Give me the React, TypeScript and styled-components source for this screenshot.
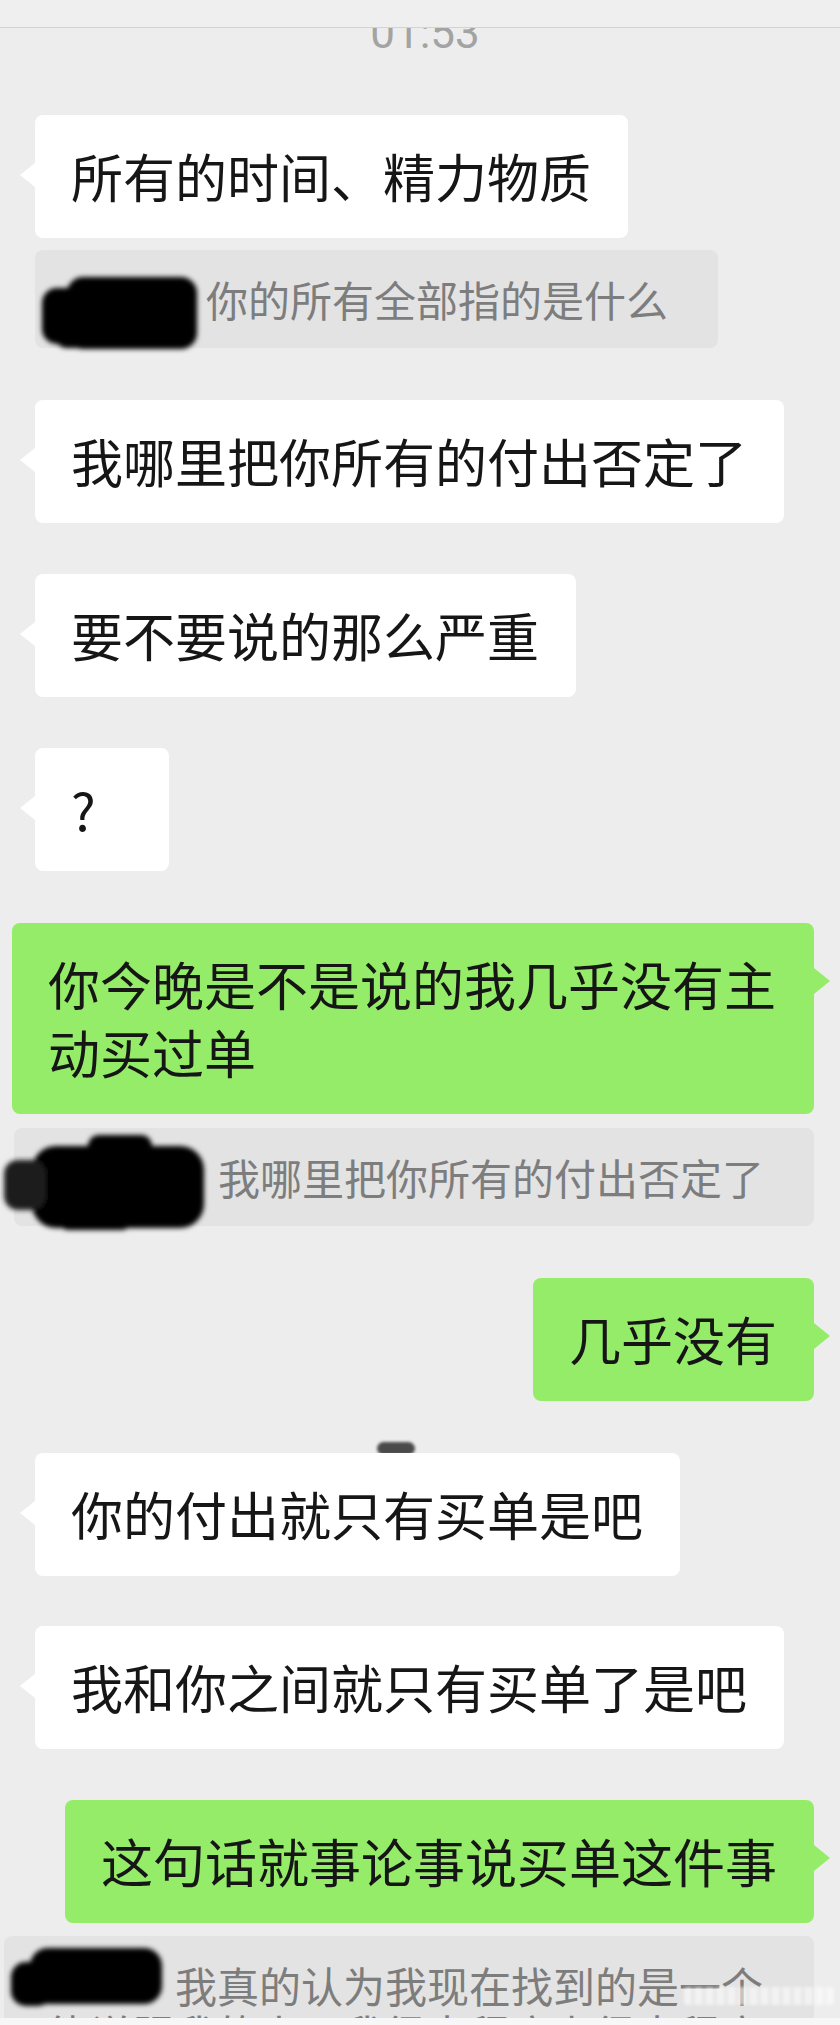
import React from "react";
import styled, { createGlobalStyle } from "styled-components";

type Side = "left" | "right";

const GlobalStyle = createGlobalStyle`
  html, body {
    margin: 0;
    padding: 0;
    background: #ededed;
  }
  body {
    font-family: "Noto Sans CJK SC", "Noto Sans", sans-serif;
  }
  * {
    box-sizing: border-box;
  }
`;

const Page = styled.div`
  position: relative;
  width: 840px;
  height: 2025px;
  overflow: hidden;
  display: flex;
  flex-direction: column;
  background: #ededed;
`;

const TopEdge = styled.div`
  flex: none;
  height: 28px;
  background: #efefef;
  border-bottom: 1px solid #d3d3d3;
`;

const TimeRow = styled.div`
  flex: none;
  height: 20px;
  overflow: hidden;
  display: flex;
  justify-content: center;
  padding-left: 10px;
`;

const TimeText = styled.span`
  font-family: Roboto, "Liberation Sans", sans-serif;
  font-size: 44px;
  line-height: 44px;
  margin-top: -17px;
  color: #a3a3a3;
`;

const Chat = styled.div`
  flex: 1;
  min-height: 0;
  overflow: hidden;
  display: flex;
  flex-direction: column;
`;

const Row = styled.div<{ $side: Side; $mt: number }>`
  position: relative;
  display: flex;
  justify-content: ${(p) => (p.$side === "right" ? "flex-end" : "flex-start")};
  margin-top: ${(p) => p.$mt}px;
  padding: 0 26px 0 ${(p) => (p.$side === "right" ? 4 : 35)}px;
`;

const Bubble = styled.div<{ $side: Side }>`
  position: relative;
  min-width: 134px;
  max-width: 802px;
  padding: 27px 37px 28px 36px;
  border-radius: 8px;
  font-size: 52px;
  line-height: 68px;
  color: #161616;
  background: ${(p) => (p.$side === "right" ? "#95ec69" : "#ffffff")};

  &::before {
    content: "";
    position: absolute;
    width: 0;
    height: 0;
    top: ${(p) => (p.$side === "right" ? 45 : 48)}px;
    border-top: ${(p) => (p.$side === "right" ? 13 : 12)}px solid transparent;
    border-bottom: ${(p) => (p.$side === "right" ? 13 : 12)}px solid transparent;
    ${(p) =>
      p.$side === "right"
        ? "left: 100%; border-left: 16px solid #95ec69;"
        : "right: 100%; border-right: 15px solid #ffffff;"}
  }
`;

const QuoteBox = styled.div`
  position: relative;
  max-width: 810px;
  padding: 25px 50px 25px 44px;
  border-radius: 8px;
  background: #e3e3e3;
  font-size: 42px;
  line-height: 48px;
  color: #7d7d7d;
`;

const NameSlot = styled.span<{ $w: number }>`
  display: inline-block;
  width: ${(p) => p.$w}px;
  height: 1px;
  vertical-align: middle;
`;

const SmearSvg = styled.svg<{ $x: number; $y: number }>`
  position: absolute;
  left: ${(p) => p.$x}px;
  top: ${(p) => p.$y}px;
  overflow: visible;
  pointer-events: none;
`;

const TimeSmudge = styled.div`
  position: absolute;
  left: 377px;
  top: -11px;
  width: 38px;
  height: 13px;
  border-radius: 7px;
  background: #4a4a4a;
  filter: blur(1.5px);
`;

const Watermark = styled.div`
  position: absolute;
  right: 6px;
  bottom: 20px;
  width: 150px;
  height: 18px;
  border-radius: 4px;
  background: repeating-linear-gradient(
    90deg,
    rgba(255, 255, 255, 0.55) 0 7px,
    rgba(255, 255, 255, 0.2) 7px 11px
  );
  filter: blur(1.5px);
`;

const BottomBar = styled.div`
  flex: none;
  height: 7px;
  background: #f7f7f7;
`;

type Blob = { x: number; y: number; w: number; h: number; r: number; fill?: string };

const Smear = ({ id, x, y, w, h, blobs }: { id: string; x: number; y: number; w: number; h: number; blobs: Blob[] }) => (
  <SmearSvg $x={x} $y={y} width={w} height={h} viewBox={`0 0 ${w} ${h}`}>
    <defs>
      <filter id={id} x="-20%" y="-20%" width="140%" height="140%">
        <feGaussianBlur stdDeviation="2.4" />
      </filter>
    </defs>
    <g filter={`url(#${id})`}>
      {blobs.map((b, i) => (
        <rect key={i} x={b.x} y={b.y} width={b.w} height={b.h} rx={b.r} fill={b.fill ?? "#000"} />
      ))}
    </g>
  </SmearSvg>
);

type Quote = {
  name: number;
  text: string;
  smear: { x: number; y: number; w: number; h: number; blobs: Blob[] };
};

type Msg = {
  side: Side;
  mt: number;
  text?: string;
  quote?: Quote;
  smudge?: boolean;
};

const messages: Msg[] = [
  { side: "left", mt: 67, text: "所有的时间、精力物质" },
  {
    side: "left",
    mt: 12,
    quote: {
      name: 127,
      text: "你的所有全部指的是什么",
      smear: {
        x: 0,
        y: 20,
        w: 170,
        h: 90,
        blobs: [
          { x: 32, y: 7, w: 130, h: 72, r: 16 },
          { x: 7, y: 18, w: 46, h: 56, r: 15 },
          { x: 20, y: 50, w: 60, h: 28, r: 12 },
        ],
      },
    },
  },
  { side: "left", mt: 52, text: "我哪里把你所有的付出否定了" },
  { side: "left", mt: 51, text: "要不要说的那么严重" },
  { side: "left", mt: 51, text: "?" },
  { side: "right", mt: 52, text: "你今晚是不是说的我几乎没有主动买过单" },
  {
    side: "right",
    mt: 14,
    quote: {
      name: 160,
      text: "我哪里把你所有的付出否定了",
      smear: {
        x: -14,
        y: -2,
        w: 215,
        h: 110,
        blobs: [
          { x: 32, y: 20, w: 172, h: 82, r: 24 },
          { x: 88, y: 9, w: 64, h: 26, r: 11 },
          { x: 4, y: 34, w: 42, h: 50, r: 14, fill: "#1c1c1c" },
          { x: 60, y: 88, w: 70, h: 16, r: 8 },
        ],
      },
    },
  },
  { side: "right", mt: 52, text: "几乎没有" },
  { side: "left", mt: 52, text: "你的付出就只有买单是吧", smudge: true },
  { side: "left", mt: 50, text: "我和你之间就只有买单了是吧" },
  { side: "right", mt: 51, text: "这句话就事论事说买单这件事" },
  {
    side: "right",
    mt: 13,
    quote: {
      name: 127,
      text: "我真的认为我现在找到的是一个能说服我的人，我很大程度上很大程度",
      smear: {
        x: 0,
        y: 8,
        w: 170,
        h: 75,
        blobs: [
          { x: 26, y: 4, w: 132, h: 56, r: 18 },
          { x: 7, y: 18, w: 42, h: 44, r: 15 },
        ],
      },
    },
  },
];

export default function App() {
  return (
    <Page>
      <GlobalStyle />
      <TopEdge />
      <TimeRow>
        <TimeText>01:53</TimeText>
      </TimeRow>
      <Chat>
        {messages.map((m, i) => (
          <Row key={i} $side={m.side} $mt={m.mt}>
            {m.smudge && <TimeSmudge />}
            {m.text && <Bubble $side={m.side}>{m.text}</Bubble>}
            {m.quote && (
              <QuoteBox>
                <Smear id={`smear-${i}`} {...m.quote.smear} />
                <NameSlot $w={m.quote.name} />
                {m.quote.text}
              </QuoteBox>
            )}
          </Row>
        ))}
      </Chat>
      <BottomBar />
      <Watermark />
    </Page>
  );
}
